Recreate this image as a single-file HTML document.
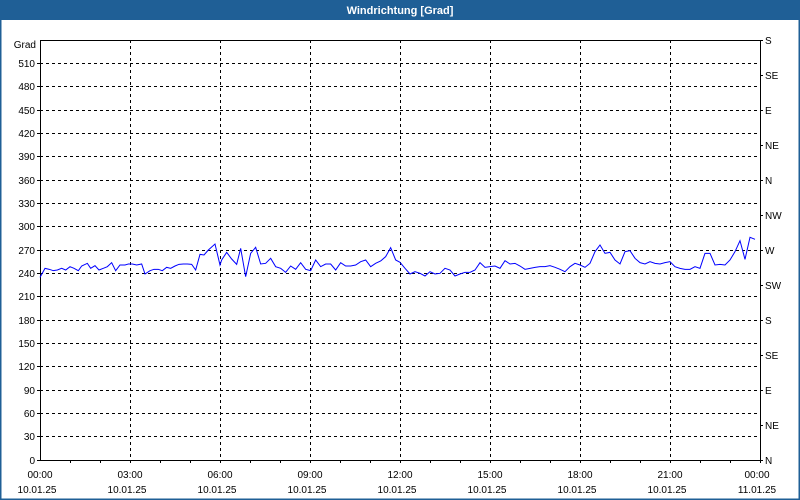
<!DOCTYPE html>
<html><head><style>
body{margin:0;width:800px;height:500px;overflow:hidden;background:#fff;font-family:"Liberation Sans",sans-serif}
</style></head><body>
<svg width="800" height="500" xmlns="http://www.w3.org/2000/svg" style="display:block">
<rect x="0" y="0" width="800" height="500" fill="#fff"/>
<rect x="0" y="0" width="800" height="20" fill="#1f5f96"/>
<rect x="0.5" y="0.5" width="799" height="499" fill="none" stroke="#1f5f96" stroke-width="2"/>
<text x="400" y="14" fill="#fff" font-size="11" font-weight="bold" text-anchor="middle">Windrichtung [Grad]</text>
<g stroke="#000" stroke-width="1" stroke-dasharray="3,3" shape-rendering="crispEdges">
<line x1="130.5" y1="40" x2="130.5" y2="460"/><line x1="220.5" y1="40" x2="220.5" y2="460"/>
<line x1="310.5" y1="40" x2="310.5" y2="460"/><line x1="400.5" y1="40" x2="400.5" y2="460"/>
<line x1="490.5" y1="40" x2="490.5" y2="460"/><line x1="580.5" y1="40" x2="580.5" y2="460"/>
<line x1="670.5" y1="40" x2="670.5" y2="460"/>
<line x1="40" y1="63.5" x2="760" y2="63.5"/><line x1="40" y1="86.5" x2="760" y2="86.5"/>
<line x1="40" y1="110.5" x2="760" y2="110.5"/><line x1="40" y1="133.5" x2="760" y2="133.5"/>
<line x1="40" y1="156.5" x2="760" y2="156.5"/><line x1="40" y1="180.5" x2="760" y2="180.5"/>
<line x1="40" y1="203.5" x2="760" y2="203.5"/><line x1="40" y1="226.5" x2="760" y2="226.5"/>
<line x1="40" y1="250.5" x2="760" y2="250.5"/><line x1="40" y1="273.5" x2="760" y2="273.5"/>
<line x1="40" y1="296.5" x2="760" y2="296.5"/><line x1="40" y1="320.5" x2="760" y2="320.5"/>
<line x1="40" y1="343.5" x2="760" y2="343.5"/><line x1="40" y1="366.5" x2="760" y2="366.5"/>
<line x1="40" y1="390.5" x2="760" y2="390.5"/><line x1="40" y1="413.5" x2="760" y2="413.5"/>
<line x1="40" y1="436.5" x2="760" y2="436.5"/>
</g>
<g stroke="#000" stroke-width="1" shape-rendering="crispEdges">
<rect x="40.5" y="40.5" width="720" height="420" fill="none"/>
<path d="M70.5 460v3M100.5 460v3M130.5 460v3M160.5 460v3M190.5 460v3M220.5 460v3M250.5 460v3M280.5 460v3M310.5 460v3M340.5 460v3M370.5 460v3M400.5 460v3M430.5 460v3M460.5 460v3M490.5 460v3M520.5 460v3M550.5 460v3M580.5 460v3M610.5 460v3M640.5 460v3M670.5 460v3M700.5 460v3M730.5 460v3M760.5 460v3"/>
<path d="M37 63.5h3M37 86.5h3M37 110.5h3M37 133.5h3M37 156.5h3M37 180.5h3M37 203.5h3M37 226.5h3M37 250.5h3M37 273.5h3M37 296.5h3M37 320.5h3M37 343.5h3M37 366.5h3M37 390.5h3M37 413.5h3M37 436.5h3M37 460.5h3"/>
<path d="M760 40.5h3M760 75.5h3M760 110.5h3M760 145.5h3M760 180.5h3M760 215.5h3M760 250.5h3M760 285.5h3M760 320.5h3M760 355.5h3M760 390.5h3M760 425.5h3M760 460.5h3"/>
</g>
<g transform="translate(0,220) scale(0.33333)"><polyline fill="none" stroke="#0000ff" stroke-width="3" points="120,172 135,145 148,148 160,152 172,150 185,145 197,150 210,140 222,145 235,152 245,138 262,130 272,145 285,137 297,150 310,145 322,140 335,128 347,152 360,135 375,135 385,132 397,132 410,135 425,132 435,162 450,152 462,148 475,148 487,152 500,142 512,145 525,138 537,133 550,132 562,132 575,133 587,150 600,103 612,105 625,90 645,72 660,135 665,120 680,97 695,117 710,133 722,85 737,170 752,100 767,82 782,132 797,130 812,115 827,140 842,145 857,157 872,138 887,148 902,128 917,148 932,152 947,120 962,140 977,132 992,132 1007,150 1022,128 1037,138 1052,138 1067,135 1082,125 1097,120 1112,140 1127,130 1142,123 1157,110 1172,83 1187,120 1200,127"/></g>
<g transform="translate(400,220) scale(0.33333)"><polyline fill="none" stroke="#0000ff" stroke-width="3" points="0,127 15,145 30,162 45,155 60,160 75,168 90,155 105,162 120,160 135,145 150,150 165,168 180,162 195,157 210,157 225,150 240,128 255,142 270,140 285,138 300,145 315,122 330,132 345,130 360,138 375,148 390,145 405,142 420,140 435,140 450,137 465,142 480,148 495,155 510,140 525,130 540,135 555,142 570,130 585,95 600,75 615,100 630,97 645,120 660,132 675,95 690,92 705,115 720,128 735,132 750,125 765,130 780,132 795,128 810,125 825,140 840,145 855,148 870,148 885,140 900,145 915,100 930,100 945,135 960,133 975,135 990,120 1005,95 1020,62 1035,118 1050,52 1065,58"/></g>
<g font-size="10" fill="#000" text-anchor="end">
<text x="36" y="48">Grad</text>
<text x="35" y="67">510</text><text x="35" y="90">480</text><text x="35" y="114">450</text><text x="35" y="137">420</text>
<text x="35" y="160">390</text><text x="35" y="184">360</text><text x="35" y="207">330</text><text x="35" y="230">300</text>
<text x="35" y="254">270</text><text x="35" y="277">240</text><text x="35" y="300">210</text><text x="35" y="324">180</text>
<text x="35" y="347">150</text><text x="35" y="370">120</text><text x="35" y="394">90</text><text x="35" y="417">60</text>
<text x="35" y="440">30</text><text x="35" y="464">0</text>
</g>
<g font-size="10" fill="#000">
<text x="765" y="44">S</text><text x="765" y="79">SE</text><text x="765" y="114">E</text><text x="765" y="149">NE</text>
<text x="765" y="184">N</text><text x="765" y="219">NW</text><text x="765" y="254">W</text><text x="765" y="289">SW</text>
<text x="765" y="324">S</text><text x="765" y="359">SE</text><text x="765" y="394">E</text><text x="765" y="429">NE</text>
<text x="765" y="464">N</text>
</g>
<g font-size="10" fill="#000" text-anchor="middle">
<text x="40" y="478">00:00</text><text x="130" y="478">03:00</text><text x="220" y="478">06:00</text><text x="310" y="478">09:00</text>
<text x="400" y="478">12:00</text><text x="490" y="478">15:00</text><text x="580" y="478">18:00</text><text x="670" y="478">21:00</text><text x="757" y="478">00:00</text>
<text x="37" y="493">10.01.25</text><text x="127" y="493">10.01.25</text><text x="217" y="493">10.01.25</text><text x="307" y="493">10.01.25</text>
<text x="397" y="493">10.01.25</text><text x="487" y="493">10.01.25</text><text x="577" y="493">10.01.25</text><text x="667" y="493">10.01.25</text><text x="757" y="493">11.01.25</text>
</g>
</svg>
</body></html>
